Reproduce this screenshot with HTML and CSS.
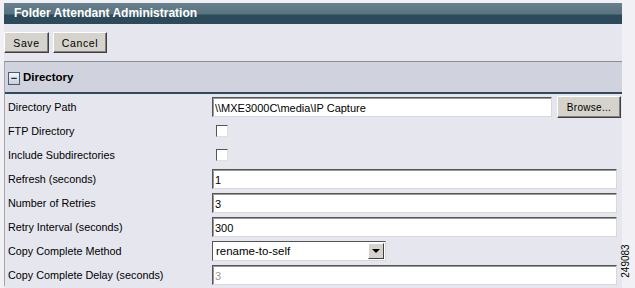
FILE: index.html
```html
<!DOCTYPE html>
<html lang="en">
<head>
  <meta charset="UTF-8">
  <title>Folder Attendant Administration</title>
  <link rel="stylesheet" href="styles.css">
</head>
<body>
<div class="panel">
  <div class="title-bar">Folder Attendant Administration</div>
  <div class="toolbar">
    <button class="btn">Save</button>
    <button class="btn">Cancel</button>
  </div>
  <div class="section">
    <div class="section-head">
      <span class="toggle">&minus;</span>
      <span class="section-title">Directory</span>
    </div>
    <div class="rows">
      <div class="row">
        <label>Directory Path</label>
        <div class="field">
          <input type="text" class="text path" value="\\MXE3000C\media\IP Capture">
          <button class="btn browse">Browse...</button>
        </div>
      </div>
      <div class="row">
        <label>FTP Directory</label>
        <div class="field"><span class="check"></span></div>
      </div>
      <div class="row">
        <label>Include Subdirectories</label>
        <div class="field"><span class="check"></span></div>
      </div>
      <div class="row">
        <label>Refresh (seconds)</label>
        <div class="field"><input type="text" class="text" value="1"></div>
      </div>
      <div class="row">
        <label>Number of Retries</label>
        <div class="field"><input type="text" class="text" value="3"></div>
      </div>
      <div class="row">
        <label>Retry Interval (seconds)</label>
        <div class="field"><input type="text" class="text" value="300"></div>
      </div>
      <div class="row">
        <label>Copy Complete Method</label>
        <div class="field">
          <div class="select">
            <span class="select-value">rename-to-self</span>
            <span class="select-arrow"></span>
          </div>
        </div>
      </div>
      <div class="row">
        <label>Copy Complete Delay (seconds)</label>
        <div class="field"><input type="text" class="text disabled" value="3"></div>
      </div>
    </div>
  </div>
</div>
<div class="fig-id">249083</div>
</body>
</html>
```

FILE: styles.css
```css
body {
  margin: 0;
  background: #f1f1f5;
  font-family: 'Liberation Sans', Arial, sans-serif;
  font-size: 10.8px;
  color: #000;
  overflow: hidden;
}

.panel {
  margin: 3px 0 0 4px;
  width: 618px;
  height: 285px;
  background: #e6e6ef;
}

.title-bar {
  height: 21px;
  box-sizing: border-box;
  padding: 3px 0 0 10px;
  background: linear-gradient(to bottom, #66808c 0, #587480 11px, #2c4a5a 12px, #2c4a5a 21px);
  color: #fff;
  font-weight: bold;
  font-size: 12px;
}

.toolbar {
  display: flex;
  gap: 4px;
  padding: 8px 0 0 0;
  height: 29px;
}

.btn {
  height: 21px;
  padding: 0 6px;
  background: #d6d3cc;
  border: 1px solid;
  border-color: #fff #404040 #404040 #fff;
  box-shadow: inset -1px -1px 0 #808080;
  font-family: 'Liberation Sans', Arial, sans-serif;
  font-size: 10.5px;
  letter-spacing: 0.6px;
  color: #000;
}

.toolbar .btn:first-child {
  width: 45px;
}

.toolbar .btn:last-child {
  width: 54px;
}

.section {
  border-top: 1px solid #8c8c92;
  border-left: 1px solid #a4a4ac;
  height: 224px;
}

.section-head {
  height: 30px;
  background: #d0d3dd;
  border-bottom: 2px solid #2c4a5a;
  display: flex;
  align-items: center;
  padding-left: 3px;
  gap: 3px;
}

.toggle {
  width: 10px;
  height: 11px;
  border: 1px solid #4a5a70;
  background: linear-gradient(to bottom, #f4f6fa, #c8d0dc);
  font-size: 11px;
  line-height: 10px;
  text-align: center;
  font-weight: bold;
  color: #203040;
  margin-top: 2px;
}

.section-title {
  font-weight: bold;
  font-size: 11.5px;
}

.rows {
  padding-top: 1px;
}

.row {
  display: flex;
  align-items: center;
  height: 24px;
}

.row label {
  width: 204px;
  padding-left: 3px;
}

.field {
  display: flex;
  align-items: center;
  gap: 5px;
}

.text {
  width: 405px;
  height: 20px;
  box-sizing: border-box;
  border: 1px solid;
  border-color: #555 #d8d8d8 #d8d8d8 #555;
  box-shadow: inset 1px 1px 0 #9a9a9a;
  padding: 1px 0 0 2px;
  background: #fff;
  font-family: 'Liberation Sans', Arial, sans-serif;
  font-size: 11px;
  color: #000;
}

.text.path {
  width: 340px;
}

.text.disabled {
  color: #9a9a9a;
}

.browse {
  width: 64px;
  height: 22px;
  padding: 0;
  font-size: 10px;
  letter-spacing: 0.3px;
}

.check {
  display: block;
  width: 12px;
  height: 12px;
  margin-left: 4px;
  box-sizing: border-box;
  border: 1px solid;
  border-color: #555 #e0e0e0 #e0e0e0 #555;
  background: #fff;
}

.select {
  width: 174px;
  height: 20px;
  box-sizing: border-box;
  border: 1px solid;
  border-color: #555 #d8d8d8 #d8d8d8 #555;
  background: #fff;
  display: flex;
  align-items: center;
  justify-content: space-between;
}

.select-value {
  padding-left: 3px;
  font-size: 11.5px;
}

.select-arrow {
  width: 16px;
  height: 16px;
  margin-right: 1px;
  box-sizing: border-box;
  background: #d6d3cc;
  border: 1px solid;
  border-color: #fff #404040 #404040 #fff;
  position: relative;
}

.select-arrow::after {
  content: "";
  position: absolute;
  left: 3px;
  top: 5px;
  border-left: 4px solid transparent;
  border-right: 4px solid transparent;
  border-top: 4px solid #000;
}

.fig-id {
  position: absolute;
  left: 604px;
  top: 255px;
  width: 44px;
  transform: rotate(-90deg);
  font-size: 10px;
  line-height: 12px;
  text-align: center;
  color: #000;
}
```
